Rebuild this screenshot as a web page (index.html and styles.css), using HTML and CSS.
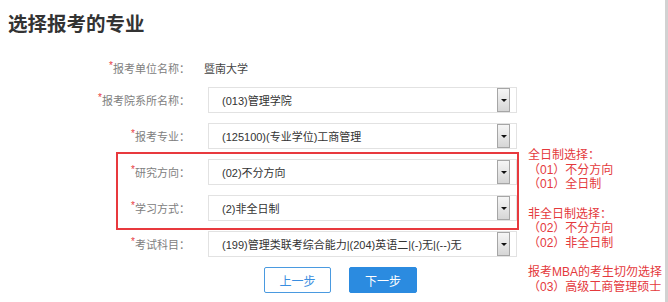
FILE: index.html
```html
<!DOCTYPE html>
<html>
	<head>
		<meta charset="utf-8">
		<title>选择报考的专业</title>
		<link rel="stylesheet" href="styles.css">
	</head>
	<body>
		<div class="page">
			<div class="main">
				<h2 class="title">选择报考的专业</h2>
				<div class="content">
					<div class="form">
						<div class="row row-text">
							<label class="label"><i>*</i>报考单位名称：</label>
							<span class="value">暨南大学</span>
						</div>
						<div class="row">
							<label class="label"><i>*</i>报考院系所名称：</label>
							<div class="select"><span class="select-text">(013)管理学院</span><span class="arrow"></span></div>
						</div>
						<div class="row">
							<label class="label"><i>*</i>报考专业：</label>
							<div class="select"><span class="select-text">(125100)(专业学位)工商管理</span><span class="arrow"></span></div>
						</div>
						<div class="row">
							<label class="label"><i>*</i>研究方向：</label>
							<div class="select"><span class="select-text">(02)不分方向</span><span class="arrow"></span></div>
						</div>
						<div class="row">
							<label class="label"><i>*</i>学习方式：</label>
							<div class="select"><span class="select-text">(2)非全日制</span><span class="arrow"></span></div>
						</div>
						<div class="row">
							<label class="label"><i>*</i>考试科目：</label>
							<div class="select"><span class="select-text">(199)管理类联考综合能力|(204)英语二|(-)无|(--)无</span><span class="arrow"></span></div>
						</div>
						<div class="buttons">
							<button class="btn btn-line">上一步</button>
							<button class="btn btn-primary">下一步</button>
						</div>
						<!-- 标注框 -->
						<div class="mark"></div>
					</div>
					<div class="notes">
						<p>全日制选择：<br>（01）不分方向<br>（01）全日制</p>
						<p>非全日制选择：<br>（02）不分方向<br>（02）非全日制</p>
						<p>报考MBA的考生切勿选择<br>（03）高级工商管理硕士</p>
					</div>
				</div>
			</div>
			<div class="scrollbar"></div>
		</div>
	</body>
</html>
```

FILE: styles.css
```css
*{
	margin: 0;
	padding: 0;
}
body{
	font-family: "Liberation Sans", "Noto Sans CJK SC", sans-serif;
	background-color: #fff;
	overflow: hidden;
}
.page{
	display: flex;
	height: 302px;
}
.main{
	flex: 1;
}
.scrollbar{
	width: 3px;
	background-color: #d2d2d2;
}
.title{
	font-family: "Noto Sans CJK SC", sans-serif;
	font-size: 19.5px;
	font-weight: bold;
	line-height: 24px;
	color: #333;
	padding: 11px 0 0 8px;
}
.content{
	display: flex;
	margin-top: 20px;
}
.form{
	position: relative;
	width: 517px;
	flex-shrink: 0;
}
.row{
	display: flex;
	align-items: center;
	height: 26px;
	margin-bottom: 10px;
}
.row-text{
	margin-bottom: 6px;
}
.label{
	width: 190px;
	flex-shrink: 0;
	text-align: right;
	font-size: 11px;
	color: #808080;
}
.label i{
	font-style: normal;
	font-size: 10px;
	color: #e8393e;
	vertical-align: top;
}
.value{
	margin-left: 14px;
	font-size: 11px;
	color: #444;
}
.select{
	display: flex;
	align-items: center;
	box-sizing: border-box;
	width: 309px;
	height: 26px;
	margin-left: 18px;
	padding-left: 13px;
	border: 1px solid #e2e2e2;
	font-size: 11px;
	color: #333;
}
.arrow{
	position: relative;
	margin-left: auto;
	margin-right: 6px;
	box-sizing: border-box;
	width: 13px;
	height: 24px;
	border: 1px solid #a6a6a6;
	background: linear-gradient(#f6f6f6, #d6d6d6);
}
.arrow::after{
	content: "";
	position: absolute;
	left: 3px;
	top: 10px;
	border-left: 3px solid transparent;
	border-right: 3px solid transparent;
	border-top: 3px solid #111;
}
.buttons{
	display: flex;
	gap: 18px;
	margin: 4px 0 0 264px;
}
.btn{
	box-sizing: border-box;
	width: 67px;
	height: 26px;
	font-family: inherit;
	font-size: 12px;
	border-radius: 2px;
	cursor: pointer;
}
.btn-line{
	background-color: #fff;
	border: 1px solid #4a9ae0;
	color: #3a8ee0;
}
.btn-primary{
	width: 68px;
	background-color: #2b8be0;
	border: 1px solid #2b8be0;
	color: #fff;
}
.mark{
	position: absolute;
	left: 116px;
	top: 97px;
	box-sizing: border-box;
	width: 403px;
	height: 78px;
	border: 2px solid #e8393e;
	pointer-events: none;
}
.notes{
	margin-left: 11px;
	padding-top: 93px;
	font-size: 12px;
	line-height: 14.67px;
	color: #e4393c;
	white-space: nowrap;
}
.notes p{
	margin-bottom: 14.67px;
}
```
